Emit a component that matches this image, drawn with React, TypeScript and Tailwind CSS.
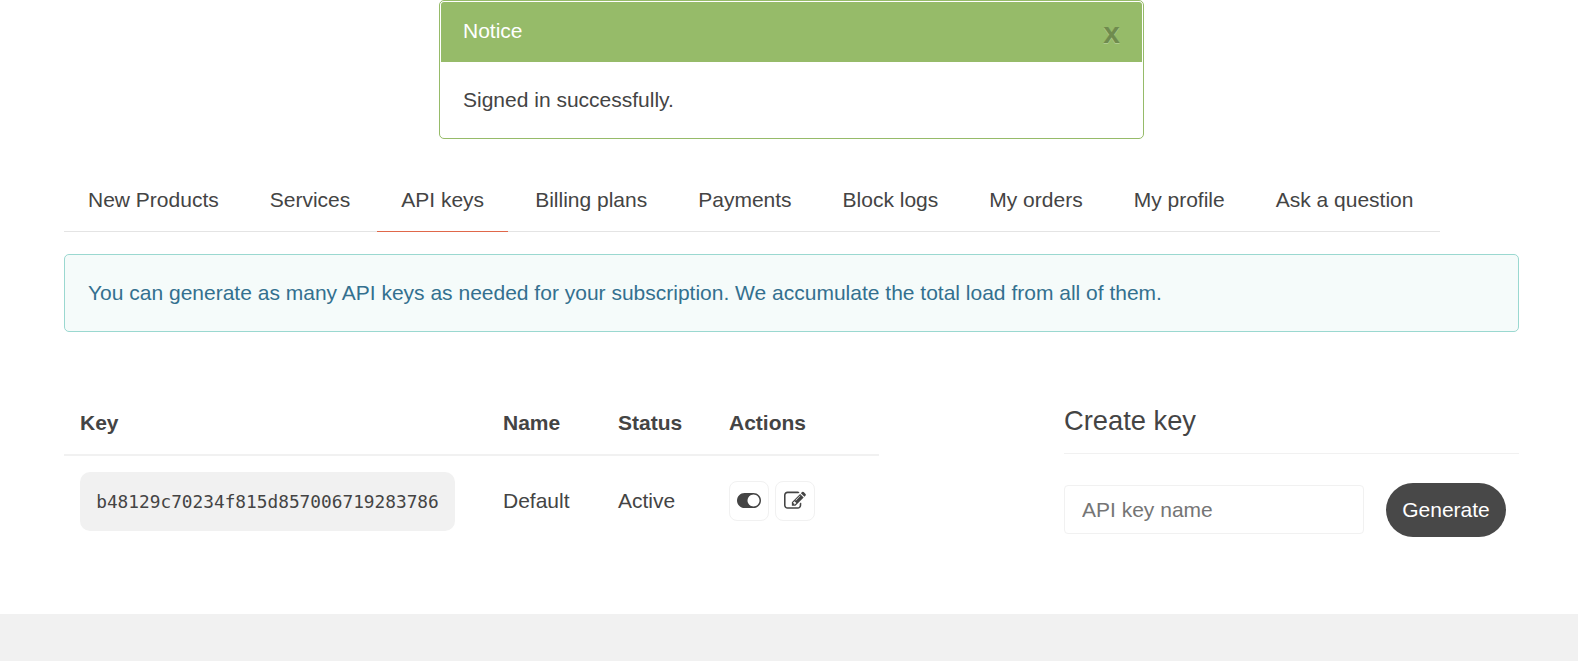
import React from "react"

const tabs = ["New Products", "Services", "API keys", "Billing plans", "Payments", "Block logs", "My orders", "My profile", "Ask a question"]

const ToggleIcon = () => (
  <svg viewBox="0 0 2048 1792" className="h-[21px] w-[24px]" fill="currentColor">
    <path d="M0 896q0-130 51-248.5t136.5-204 204-136.5 248.5-51h768q130 0 248.5 51t204 136.5 136.5 204 51 248.5-51 248.5-136.5 204-204 136.5-248.5 51h-768q-130 0-248.5-51t-204-136.5-136.5-204-51-248.5zm1408 512q104 0 198.5-40.5t163-109.5 109.5-163 40.5-198.5-40.5-198.5-109.5-163-163-109.5-198.5-40.5-198.5 40.5-163 109.5-109.5 163-40.5 198.5 40.5 198.5 109.5 163 163 109.5 198.5 40.5z" />
  </svg>
)

const EditIcon = () => (
  <svg viewBox="0 0 1792 1792" className="h-[22px] w-[22px]" fill="currentColor">
    <path d="M888 1184l116-116-152-152-116 116v56h96v96h56zm440-720q-16-16-33 1l-350 350q-17 17-1 33t33-1l350-350q17-17 1-33zm80 594v190q0 119-84.5 203.5t-203.5 84.5h-832q-119 0-203.5-84.5t-84.5-203.5v-832q0-119 84.5-203.5t203.5-84.5h832q63 0 117 25 15 7 18 23 3 17-9 29l-49 49q-14 14-32 8-23-6-45-6h-832q-66 0-113 47t-47 113v832q0 66 47 113t113 47h832q66 0 113-47t47-113v-126q0-13 9-22l64-64q15-15 35-7t20 29zm-96-738l288 288-672 672h-288v-288zm444 132l-92 92-288-288 92-92q28-28 68-28t68 28l152 152q28 28 28 68t-28 68z" />
  </svg>
)

const App = () => {
  return (
    <div className="flex min-h-[661px] flex-col bg-white font-['Liberation_Sans',Arial,sans-serif] text-[21px] leading-[30px] text-[#444444]">
      <div className="flex justify-center pl-[5px]">
        <div className="h-[139px] w-[705px] overflow-hidden rounded-[5px] border border-[#96bb69] p-px">
          <div className="flex h-[60px] items-center justify-between rounded-t-[3px] bg-[#96bb69] px-[22px] text-white">
            <span className="-mt-[3px]">Notice</span>
            <span className="mt-[1px] text-[30px] font-bold text-black opacity-25 [text-shadow:0_1px_0_#fff]">x</span>
          </div>
          <div className="px-[22px] pt-[23px]">Signed in successfully.</div>
        </div>
      </div>

      <div className="flex-1 pl-[64px] pr-[59px]">
        <div className="mt-[34px] flex w-[1376px] gap-[3px] border-b border-[#e4e4e4]">
          {tabs.map(tab => (
            <a
              key={tab}
              className={`-mb-px block h-[59px] border-b px-[24px] pt-[12px] ${tab === "API keys" ? "border-[#e0674a]" : "border-transparent"}`}
            >
              {tab}
            </a>
          ))}
        </div>

        <div className="mt-[22px] flex h-[78px] items-center rounded-[5px] border border-[#9ad8d0] bg-[#f5fbfa] pl-[23px] text-[#33708f]">
          You can generate as many API keys as needed for your subscription. We accumulate the total load from all of them.
        </div>

        <div className="mt-[64px] flex justify-between">
          <table className="h-fit w-[815px] table-fixed border-collapse text-left">
            <thead>
              <tr className="h-[59px] border-b-2 border-[#f1f1f1]">
                <th className="w-[439px] pb-[4px] pl-[16px] font-bold">Key</th>
                <th className="w-[115px] pb-[4px] font-bold">Name</th>
                <th className="w-[111px] pb-[4px] font-bold">Status</th>
                <th className="pb-[4px] font-bold">Actions</th>
              </tr>
            </thead>
            <tbody>
              <tr className="h-[92px]">
                <td className="pl-[16px]">
                  <code className="flex h-[59px] w-[375px] items-center justify-center rounded-[10px] bg-[#f1f1f1] font-['DejaVu_Sans_Mono',monospace] text-[17.8px]">
                    b48129c70234f815d857006719283786
                  </code>
                </td>
                <td className="pb-[2px]">Default</td>
                <td className="pb-[2px]">Active</td>
                <td className="pb-[2px]">
                  <div className="flex gap-[6px]">
                    <button className="flex h-[40px] w-[40px] items-center justify-center rounded-[8px] border border-[#f1f1f1]">
                      <ToggleIcon />
                    </button>
                    <button className="flex h-[40px] w-[40px] items-center justify-center rounded-[8px] border border-[#f1f1f1]">
                      <EditIcon />
                    </button>
                  </div>
                </td>
              </tr>
            </tbody>
          </table>

          <div className="w-[455px]">
            <h3 className="h-[58px] border-b border-[#f1f1f1] text-[27.3px] leading-[50px]">Create key</h3>
            <div className="mt-[29px] flex items-center gap-[22px]">
              <input
                placeholder="API key name"
                className="-mt-px h-[49px] w-[300px] rounded-[4px] border border-[#f1f1f1] px-[17px] placeholder:text-[#757575]"
              />
              <button className="h-[54px] w-[120px] rounded-full bg-[#484848] text-white">Generate</button>
            </div>
          </div>
        </div>
      </div>

      <div className="h-[47px] bg-[#f1f1f1]" />
    </div>
  )
}

export default App
